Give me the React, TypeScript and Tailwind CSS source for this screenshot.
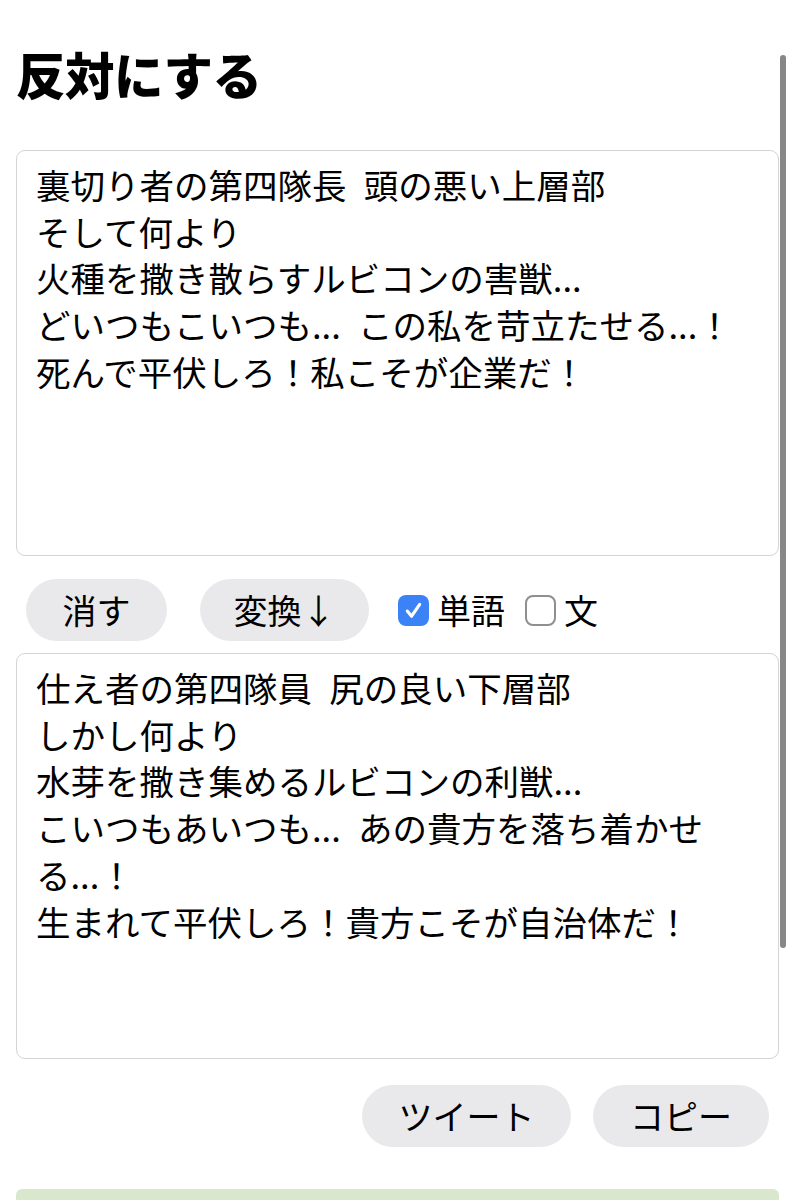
import { useState } from "react"

const SOURCE =
    "裏切り者の第四隊長\u2002頭の悪い上層部\nそして何より\n火種を撒き散らすルビコンの害獣...\nどいつもこいつも...\u2002この私を苛立たせる...！\n死んで平伏しろ！私こそが企業だ！"

const RESULT =
    "仕え者の第四隊員\u2002尻の良い下層部\nしかし何より\n水芽を撒き集めるルビコンの利獣...\nこいつもあいつも...\u2002あの貴方を落ち着かせる...！\n生まれて平伏しろ！貴方こそが自治体だ！"

function Check({ checked, onClick }: { checked: boolean; onClick: () => void }) {
    return (
        <button
            type="button"
            onClick={onClick}
            className={`w-[31px] h-[31px] rounded-[8px] flex items-center justify-center shrink-0 ${checked ? "bg-[#3b82f6]" : "border-[2.5px] border-[#8e8e93] bg-white"
                }`}
        >
            {checked && (
                <svg viewBox="0 0 24 24" className="w-[27px] h-[27px]" fill="none">
                    <path d="M6.5 12.5l3.8 4.6L17.5 6.5" stroke="white" strokeWidth="2.8" strokeLinecap="round" strokeLinejoin="round" />
                </svg>
            )}
        </button>
    )
}

export default function App() {
    const [input, setInput] = useState(SOURCE)
    const [output, setOutput] = useState(RESULT)
    const [word, setWord] = useState(true)
    const [sentence, setSentence] = useState(false)

    const btn = "h-[62px] rounded-full bg-[#e9e9eb] text-[34px] leading-none text-black flex items-center justify-center"
    const area =
        "block w-full h-[406px] resize-none rounded-[9px] border border-[#d4d4d8] bg-white px-[19px] py-[10px] text-[34.5px] leading-[46.7px] text-black outline-none overflow-hidden"

    return (
        <div className="relative bg-white px-4 text-black font-['Noto_Sans_CJK_JP','Noto_Sans',sans-serif]">
            <h1 className="pt-[44px] text-[49.5px] leading-[60px] font-black tracking-[-0.5px]">反対にする</h1>

            <textarea className={`${area} mt-[46px]`} value={input} onChange={(e) => setInput(e.target.value)} />

            <div className="flex items-center pl-[10px] mt-[23px]">
                <button className={`${btn} w-[141px]`} onClick={() => setInput("")}>消す</button>
                <button className={`${btn} w-[169px] ml-[33px]`}>変換↓</button>
                <div className="ml-[29px]">
                    <Check checked={word} onClick={() => setWord(!word)} />
                </div>
                <span className="ml-[8px] text-[34px] leading-none">単語</span>
                <div className="ml-[20px]">
                    <Check checked={sentence} onClick={() => setSentence(!sentence)} />
                </div>
                <span className="ml-[8px] text-[34px] leading-none">文</span>
            </div>

            <textarea className={`${area} mt-[12px]`} value={output} onChange={(e) => setOutput(e.target.value)} />

            <div className="flex justify-end gap-[22px] pr-[10px] mt-[26px]">
                <button className={`${btn} w-[209px]`}>ツイート</button>
                <button className={`${btn} w-[176px]`}>コピー</button>
            </div>

            <div className="mt-[42px] h-[12px] rounded-t-[6px] bg-[#d9e8cc]" />

            {/* page scroll indicator */}
            <div className="absolute left-[780px] top-[55px] w-[6px] h-[893px] rounded-full bg-[#878787]" />
        </div>
    )
}
